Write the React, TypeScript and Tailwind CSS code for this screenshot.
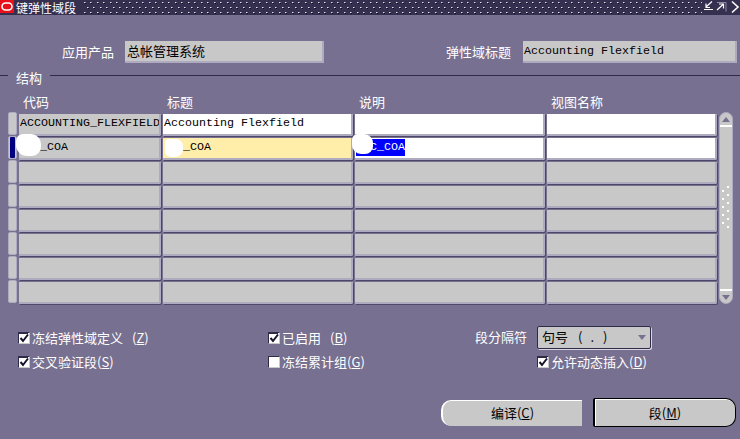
const cjk = "font-['Noto_Sans_CJK_SC','Liberation_Sans',sans-serif]";
const mono = "font-['Liberation_Mono',monospace]";
const headers = [
  { label: "代码", width: "w-[144px]" },
  { label: "标题", width: "w-[192px]" },
  { label: "说明", width: "w-[192px]" },
  { label: "视图名称", width: "w-[170px]" },
];
const cellWidths = ["w-[142px] mr-[2px]", "w-[190px] mr-[2px]", "w-[190px] mr-[2px]", "w-[170px]"];
const cellBase = "shrink-0 mt-[2px] h-[22px] border-b-2 border-r-2 border-[#aeaac0] rounded-br-[2px] shadow-[1px_1px_0_#4d4868] px-[1px] text-[11.67px] leading-[19px] text-black whitespace-nowrap overflow-hidden " + mono;

function Logo() {
  return (
    <svg width="14" height="14" viewBox="0 0 14 14" className="shrink-0">
      <rect width="14" height="13" fill="#e8101a" />
      <rect x="2" y="3" width="10" height="7" rx="3.5" fill="none" stroke="#fff" strokeWidth="1.6" />
    </svg>
  );
}

function Stipple() {
  return (
    <svg className="flex-1 h-[14px]" aria-hidden="true">
      <defs>
        <pattern id="dots" width="13" height="10" patternUnits="userSpaceOnUse">
          {[0, 6].map((x) => (
            <g key={x}>
              <rect x={x} y="2" width="1" height="1" fill="#e4e2ec" />
              <rect x={x + 1} y="2" width="1" height="1" fill="#8d89a3" />
              <rect x={x + 1} y="3" width="1" height="1" fill="#0c0a18" />
            </g>
          ))}
          {[3, 9].map((x) => (
            <g key={x}>
              <rect x={x} y="7" width="1" height="1" fill="#e4e2ec" />
              <rect x={x + 1} y="7" width="1" height="1" fill="#8d89a3" />
              <rect x={x + 1} y="8" width="1" height="1" fill="#0c0a18" />
            </g>
          ))}
        </pattern>
      </defs>
      <rect width="100%" height="100%" fill="url(#dots)" />
    </svg>
  );
}

function WindowButtons() {
  return (
    <svg width="38" height="14" viewBox="0 0 38 14" className="shrink-0" fill="none" stroke="#fff">
      <path d="M2 9.5h9M10 1.5L4 7M4 3.5V7.5H8" strokeWidth="1.2" />
      <path d="M15 2.5h9v9" stroke="#8d89a3" strokeWidth="1" />
      <path d="M15 10L21 4.5M17 4H21.5V8.5" strokeWidth="1.2" />
      <path d="M30 1.5L36 7L30 12.5" strokeWidth="1.6" />
    </svg>
  );
}

function Check({ checked }: { checked: boolean }) {
  return (
    <span className="w-[11px] h-[11px] shrink-0 bg-white border-t border-l border-[#2f2a48] shadow-[1px_1px_0_#c8c8c8] relative">
      {checked && (
        <svg width="10" height="10" viewBox="0 0 10 10" className="absolute left-0 top-0">
          <rect x="0" y="0" width="9" height="1" fill="#2f2a48" />
          <path d="M1.5 5L4 8L9 1.5" fill="none" stroke="#16122a" strokeWidth="2" />
        </svg>
      )}
    </span>
  );
}

function CheckLabel({ text, hot, checked = true, gap }: { text: string; hot: string; checked?: boolean; gap?: boolean }) {
  return (
    <div className="flex items-center gap-[3px] text-white text-[13px] leading-none">
      <Check checked={checked} />
      <span className="whitespace-nowrap">
        {text}
        {gap ? <span className="inline-block w-[9px]" /> : null}(<u>{hot}</u>)
      </span>
    </div>
  );
}

function Indicator({ active }: { active?: boolean }) {
  return (
    <div className="shrink-0 w-[9px] h-[23px] mr-[2px] rounded-[2px] bg-[#c8c8c8] border border-[#aeaac0] flex justify-center">
      {active && <div className="w-[5px] h-[21px] bg-[#00007f] rounded-[1px]" />}
    </div>
  );
}

function Scrollbar() {
  return (
    <div className="w-[14px] h-[192px] ml-[2px] rounded-[7px] bg-[#c8c8c8] border border-[#aeaac0] flex flex-col items-center">
      <div className="h-[14px] w-full border-b-2 border-white flex items-center justify-center">
        <svg width="8" height="5" viewBox="0 0 8 5"><path d="M4 0L8 5H0Z" fill="#777090" /></svg>
      </div>
      <div className="flex-1 flex items-center justify-center">
        <svg width="8" height="44" viewBox="0 0 8 44" fill="#fff">
          {[0, 8, 16, 24, 32, 40].map((y) => <rect key={y} x="5" y={y} width="2" height="2" />)}
          {[4, 12, 20, 28, 36].map((y) => <rect key={y} x="0" y={y} width="2" height="2" />)}
        </svg>
      </div>
      <div className="h-[14px] w-full border-t-2 border-white flex items-center justify-center">
        <svg width="8" height="5" viewBox="0 0 8 5"><path d="M0 0H8L4 5Z" fill="#777090" /></svg>
      </div>
    </div>
  );
}

export default function App() {
  const blank = Array.from({ length: 6 });
  return (
    <div className={"w-[740px] h-[439px] bg-[#777090] overflow-hidden flex flex-col " + cjk}>
      <div className="h-[15px] bg-[#35304f] flex items-start shrink-0">
        <Logo />
        <span className="shrink-0 ml-[2px] mr-[8px] text-white text-[12px] leading-[15px] whitespace-nowrap">键弹性域段</span>
        <Stipple />
        <WindowButtons />
      </div>

      <div className="flex items-center mt-[26px] h-[22px] text-white text-[13px]">
        <span className="ml-[62px] w-[63px]">应用产品</span>
        <div className="w-[199px] h-[22px] pl-[2px] bg-[#c8c8c8] border-b-2 border-r-2 border-[#aeaac0] text-black leading-[19px]">总帐管理系统</div>
        <span className="ml-[122px] w-[77px]">弹性域标题</span>
        <div className={"w-[214px] h-[22px] pl-[1px] pt-[1px] bg-[#c8c8c8] border-b-2 border-r-2 border-[#aeaac0] text-black text-[11.67px] leading-[19px] " + mono}>Accounting Flexfield</div>
      </div>

      <div className="flex items-center mt-[5px] h-[15px] text-white text-[13px]">
        <div className="w-[8px] h-px bg-[#2f2a48]" />
        <span className="px-[8px] leading-none relative top-[2px]">结构</span>
        <div className="flex-1 h-px bg-[#2f2a48]" />
      </div>

      <div className="flex mt-[10px] h-[17px] pl-[19px] text-white text-[13px] leading-[17px]">
        {headers.map((h) => (
          <div key={h.label} className={h.width + " pl-[4px]"}>{h.label}</div>
        ))}
      </div>

      <div className="relative flex items-start mt-[2px] pl-[8px]">
        <div className="flex flex-col">
          <div className="flex h-[24px]">
            <Indicator />
            <div className={cellBase + " " + cellWidths[0] + " bg-[#c8c8c8]"}>ACCOUNTING_FLEXFIELD</div>
            <div className={cellBase + " " + cellWidths[1] + " bg-white"}>Accounting Flexfield</div>
            <div className={cellBase + " " + cellWidths[2] + " bg-white"} />
            <div className={cellBase + " " + cellWidths[3] + " bg-white"} />
          </div>
          <div className="flex h-[24px]">
            <Indicator active />
            <div className={cellBase + " " + cellWidths[0] + " bg-[#c8c8c8] pl-[21px]"}>_COA</div>
            <div className={cellBase + " " + cellWidths[1] + " bg-[#ffedaa] pl-[20px]"}>_COA</div>
            <div className={cellBase + " " + cellWidths[2] + " bg-white"}>
              <span className="inline-block bg-[#0000ff] text-white w-[49px] pl-[14px] h-[17px] leading-[16px] mt-[1px]">C_COA</span>
            </div>
            <div className={cellBase + " " + cellWidths[3] + " bg-white"} />
          </div>
          {blank.map((_, r) => (
            <div key={r} className="flex h-[24px]">
              <Indicator />
              {cellWidths.map((w) => (
                <div key={w + r} className={cellBase + " " + w + " bg-[#c8c8c8]"} />
              ))}
            </div>
          ))}
        </div>
        <Scrollbar />
        {/* white paint-overs from the original screenshot */}
        <div className="absolute left-[16px] top-[22px] w-[25px] h-[22px] bg-white rounded-[7px_10px_9px_11px]" />
        <div className="absolute left-[165px] top-[27px] w-[18px] h-[18px] bg-white rounded-[4px_7px_8px_6px]" />
        <div className="absolute left-[352px] top-[22px] w-[21px] h-[20px] bg-white rounded-[6px_9px_8px_9px]" />
      </div>

      <div className="grid grid-cols-[250px_207px_1fr] grid-rows-[24px_24px] mt-[21px] pl-[18px] items-center text-white text-[13px]">
        <CheckLabel text="冻结弹性域定义" hot="Z" gap />
        <CheckLabel text="已启用" hot="B" gap />
        <div className="flex items-center">
          <span className="w-[62px] whitespace-nowrap">段分隔符</span>
          <div className="w-[114px] h-[23px] bg-[#c8c8c8] border border-[#2f2a48] shadow-[1px_1px_0_#d8d6e2] rounded-[2px] flex items-center pl-[4px] text-black whitespace-nowrap">
            <span>句号</span>
            <span className="ml-[10px]">(</span>
            <span className="ml-[8px]">.</span>
            <span className="ml-[9px]">)</span>
            <svg width="8" height="5" viewBox="0 0 8 5" className="ml-auto mr-[4px]"><path d="M0 0H8L4 5Z" fill="#777090" /></svg>
          </div>
        </div>
        <CheckLabel text="交叉验证段" hot="S" />
        <CheckLabel text="冻结累计组" hot="G" checked={false} />
        <div className="pl-[62px]">
          <CheckLabel text="允许动态插入" hot="D" />
        </div>
      </div>

      <div className="flex justify-end items-center gap-[11px] mt-[25px] pr-[4px] text-black text-[13px]">
        <div className="w-[141px] h-[26px] bg-[#c8c8c8] border-l-2 border-t border-white rounded-l-[10px] flex items-center justify-center"><span>编译(<u>C</u>)</span></div>
        <div className="w-[143px] h-[29px] bg-[#c8c8c8] border border-black border-l-2 shadow-[inset_1px_1px_0_#fff] rounded-r-[10px] rounded-tl-[2px] rounded-bl-[2px] flex items-center justify-center"><span>段(<u>M</u>)</span></div>
      </div>
    </div>
  );
}
